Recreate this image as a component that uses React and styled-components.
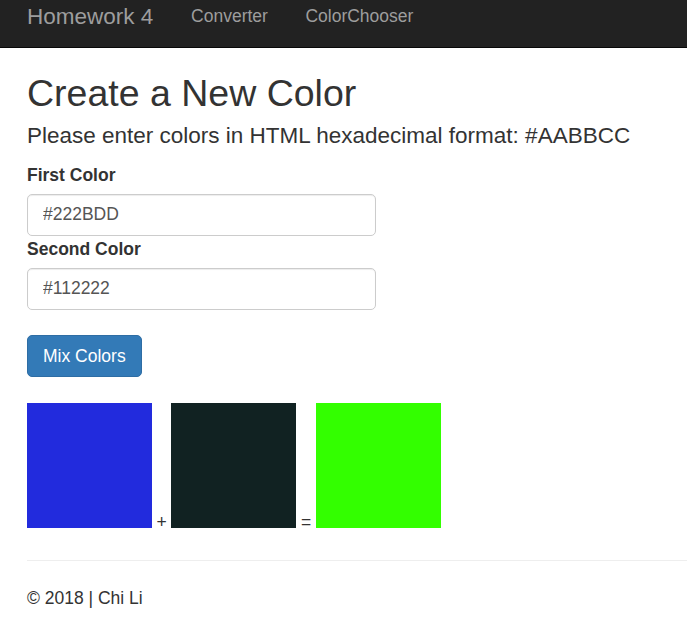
import styled, {createGlobalStyle} from "styled-components";

const GlobalStyle = createGlobalStyle`
	html, body {
		margin: 0;
		padding: 0;
		background: #fff;
	}
	body {
		font-family: "Liberation Sans", Arial, sans-serif;
		font-size: 17.5px;
		line-height: 25px;
		color: #333;
	}
	* {
		box-sizing: border-box;
	}
`;

const Navbar = styled.nav`
	display: flex;
	align-items: flex-start;
	height: 48px;
	padding: 4px 0 0 27px;
	background: #222;
	border-bottom: 1px solid #080808;
`;

const Brand = styled.a`
	font-size: 22.5px;
	line-height: 25px;
	color: #9d9d9d;
	text-decoration: none;
	margin-right: 19px;
`;

const NavLink = styled.a`
	font-size: 17.5px;
	line-height: 25px;
	color: #9d9d9d;
	text-decoration: none;
	padding: 0 18.75px;
`;

const Main = styled.main`
	padding: 0 0 0 27px;
`;

const Title = styled.h2`
	font-size: 37.5px;
	font-weight: 500;
	line-height: 41.25px;
	margin: 24.5px 0 10px;
`;

const Subtitle = styled.h4`
	font-size: 22.5px;
	font-weight: 500;
	line-height: 24.75px;
	margin: 0 0 14.5px;
`;

const Field = styled.div`
	display: flex;
	flex-direction: column;
	align-items: flex-start;

	& + & {
		margin-top: 1px;
	}
`;

const Label = styled.label`
	font-weight: bold;
	line-height: 25px;
	margin-bottom: 5.5px;
`;

const Input = styled.input`
	width: 349px;
	height: 42.5px;
	padding: 7.5px 15px;
	font-family: inherit;
	font-size: 17.5px;
	line-height: 25px;
	color: #555;
	background: #fff;
	border: 1.25px solid #ccc;
	border-radius: 5px;
	box-shadow: inset 0 1px 1px rgba(0, 0, 0, 0.075);
	outline: none;
`;

const Button = styled.button`
	display: block;
	margin-top: 25px;
	padding: 7.5px 15px;
	font-family: inherit;
	font-size: 17.5px;
	line-height: 25px;
	color: #fff;
	background: #337ab7;
	border: 1.25px solid #2e6da4;
	border-radius: 5px;
`;

const Swatches = styled.div`
	display: flex;
	align-items: baseline;
	column-gap: 4.55px;
	margin-top: 25.5px;
`;

const Swatch = styled.div`
	width: 125px;
	height: 125px;
	background: ${p => p.color};
`;

const Operator = styled.span`
	line-height: 25px;
`;

const Rule = styled.hr`
	margin: 25.5px 0 25px;
	border: 0;
	border-top: 1.25px solid #eee;
`;

const Footer = styled.footer`
	line-height: 25px;
`;

export default function App(){
	return (
		<>
			<GlobalStyle/>
			<Navbar>
				<Brand href="#">Homework 4</Brand>
				<NavLink href="#">Converter</NavLink>
				<NavLink href="#">ColorChooser</NavLink>
			</Navbar>

			<Main>
				<Title>Create a New Color</Title>
				<Subtitle>Please enter colors in HTML hexadecimal format: #AABBCC</Subtitle>

				<Field>
					<Label>First Color</Label>
					<Input defaultValue="#222BDD"/>
				</Field>
				<Field>
					<Label>Second Color</Label>
					<Input defaultValue="#112222"/>
				</Field>

				<Button>Mix Colors</Button>

				<Swatches>
					<Swatch color="#222bdd"/>
					<Operator>+</Operator>
					<Swatch color="#112222"/>
					<Operator>=</Operator>
					<Swatch color="#33ff00"/>
				</Swatches>

				<Rule/>
				<Footer>© 2018 | Chi Li</Footer>
			</Main>
		</>
	);
}
